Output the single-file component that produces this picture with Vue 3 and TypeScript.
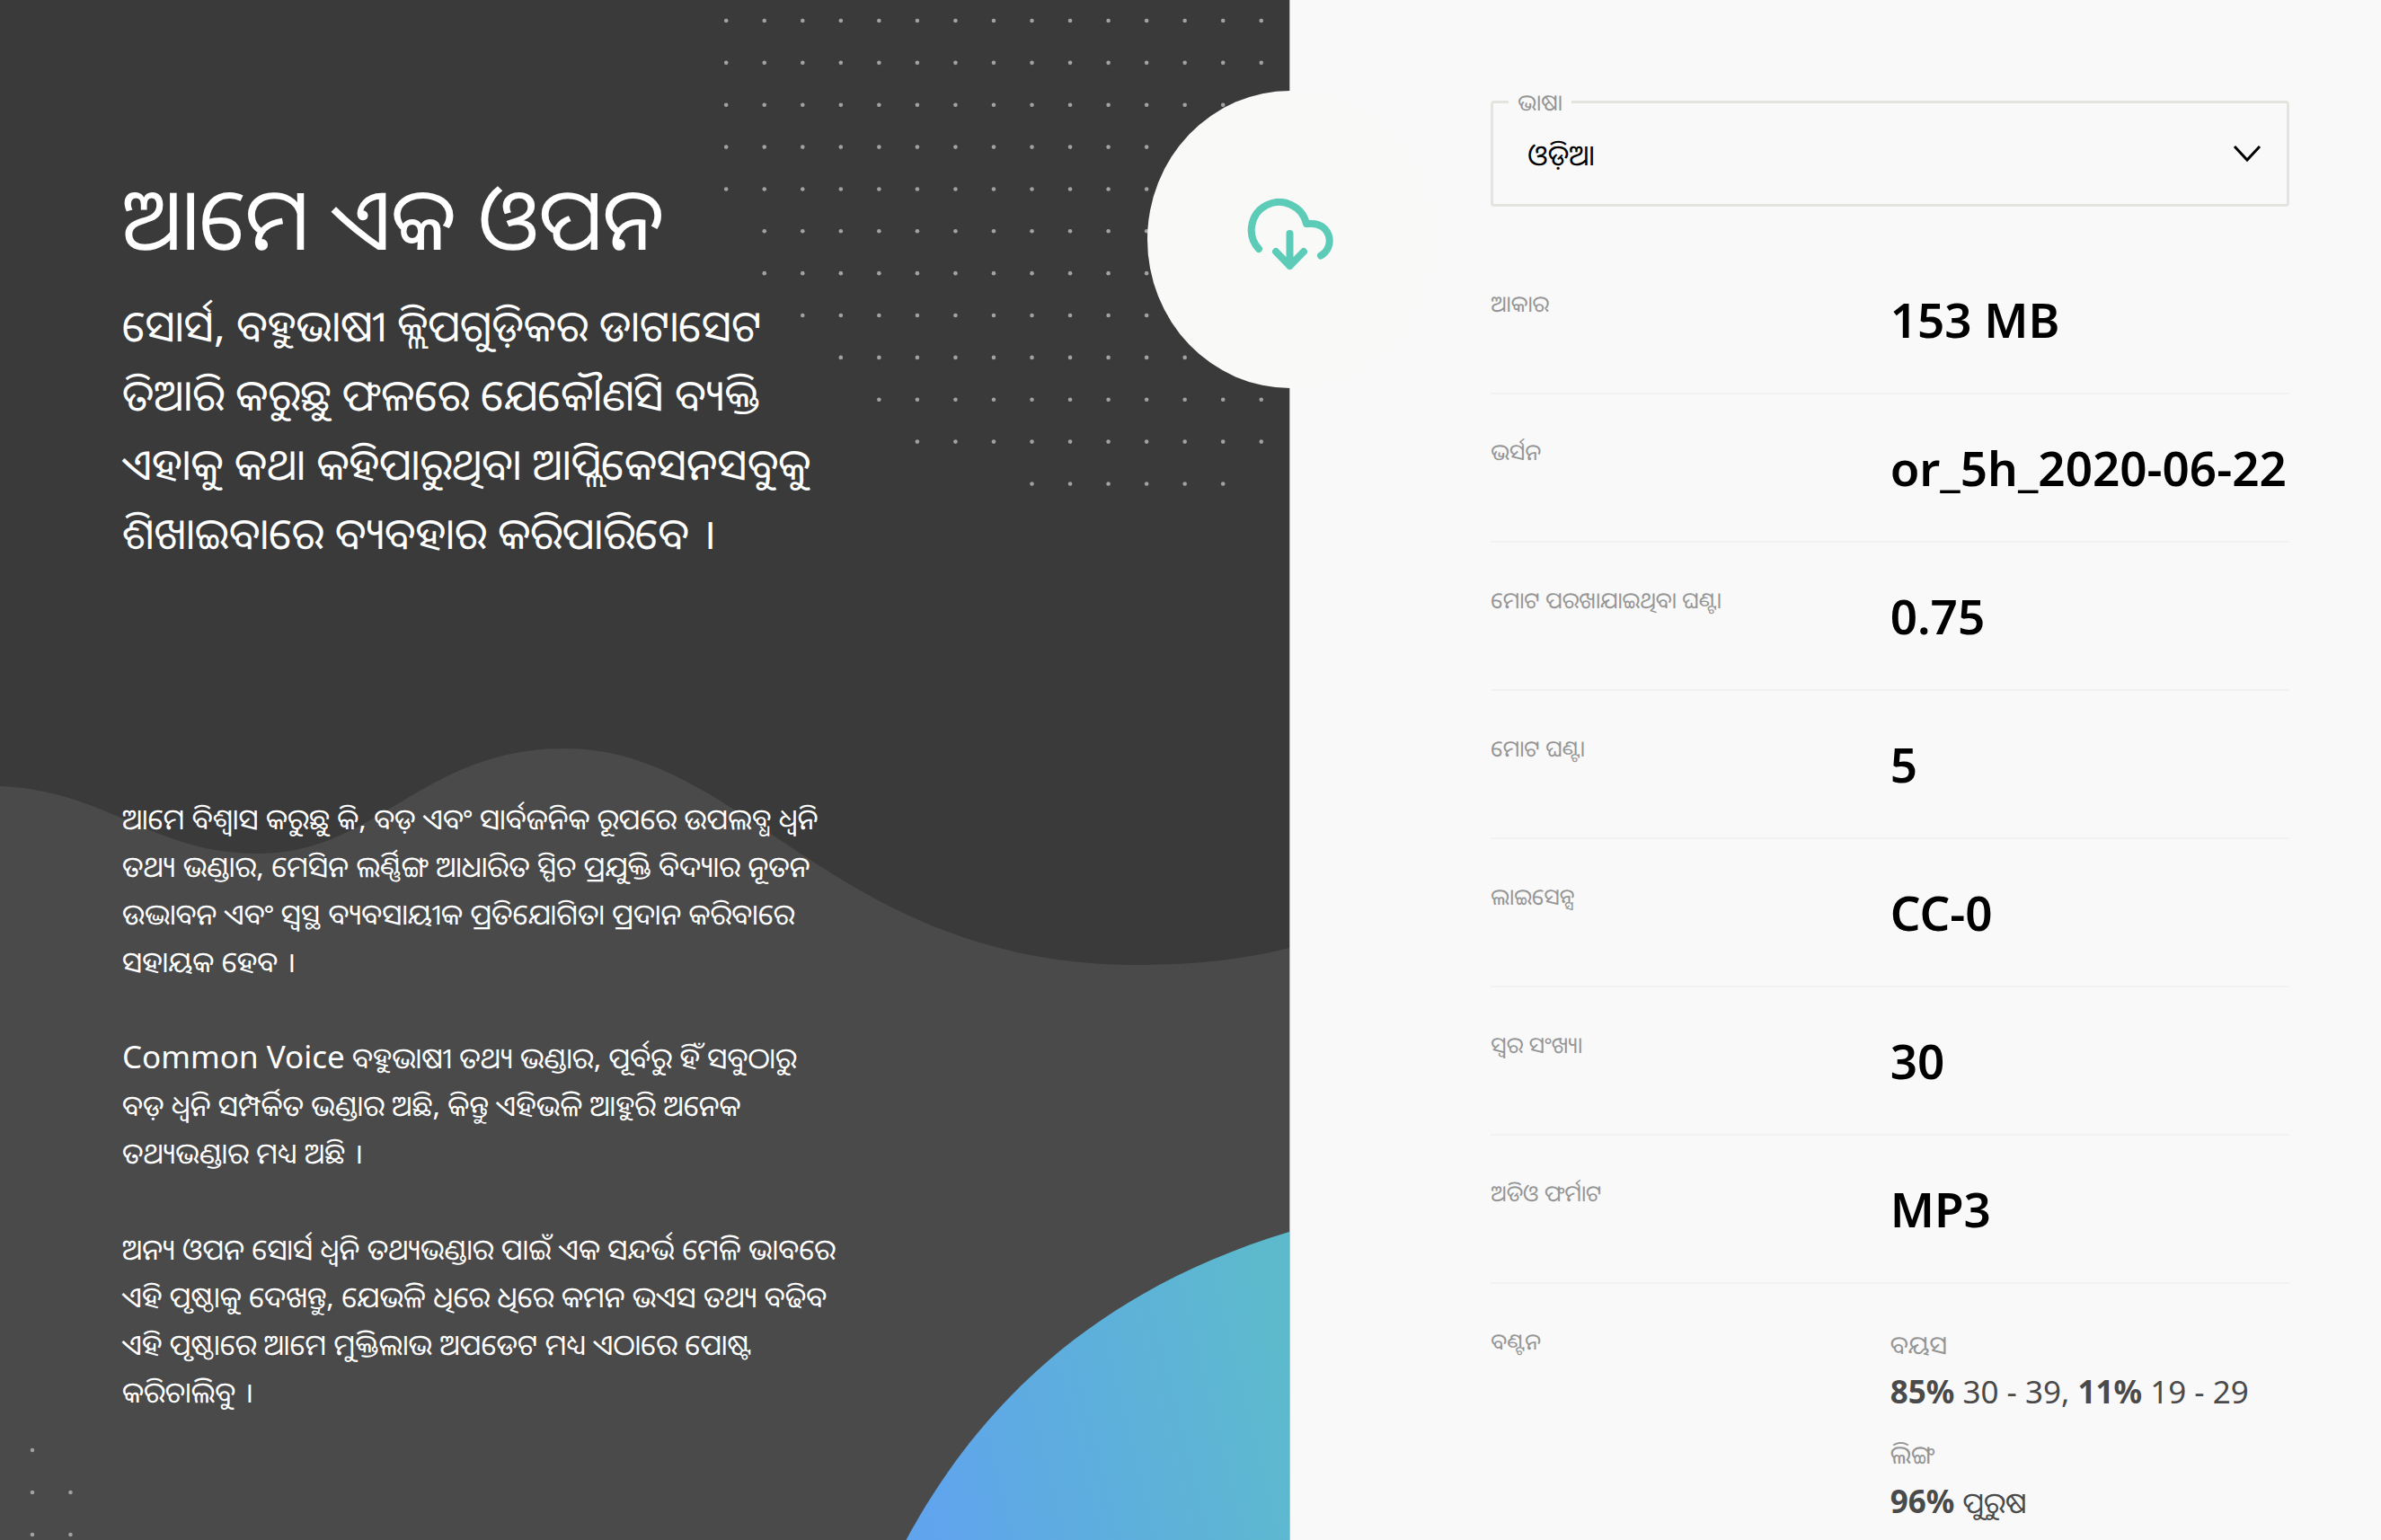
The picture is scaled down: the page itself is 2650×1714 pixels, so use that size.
<script setup lang="ts">
import { computed, ref } from 'vue'

interface Dot {
  x: number
  y: number
}

interface Share {
  percent: string
  name: string
}

// First and last filled column for each row of the dotted pattern
const dotRows: [number, number][] = [
  [0, 14], [0, 14], [0, 14], [0, 14], [0, 14], [1, 14],
  [1, 14], [2, 14], [3, 14], [4, 14], [5, 14], [8, 13],
]

const topDots = computed<Dot[]>(() =>
  dotRows.flatMap(([from, to], row) =>
    Array.from({ length: to - from + 1 }, (_, i) => ({
      x: 808.6 + (from + i) * 42.56,
      y: 23 + row * 46.86,
    })),
  ),
)

const bottomDots: Dot[] = [
  { x: 36, y: 1614 },
  { x: 36, y: 1661 },
  { x: 78.5, y: 1661 },
  { x: 36, y: 1708 },
  { x: 78.5, y: 1708 },
]

const language = ref('or')

const facts = [
  { label: 'ଆକାର', value: '153 MB' },
  { label: 'ଭର୍ସନ', value: 'or_5h_2020-06-22' },
  { label: 'ମୋଟ ପରଖାଯାଇଥିବା ଘଣ୍ଟା', value: '0.75' },
  { label: 'ମୋଟ ଘଣ୍ଟା', value: '5' },
  { label: 'ଲାଇସେନ୍ସ', value: 'CC-0' },
  { label: 'ସ୍ୱର ସଂଖ୍ୟା', value: '30' },
  { label: 'ଅଡିଓ ଫର୍ମାଟ', value: 'MP3' },
]

const splits: { title: string; odia?: boolean; shares: Share[] }[] = [
  {
    title: 'ବୟସ',
    shares: [
      { percent: '85%', name: '30 - 39' },
      { percent: '11%', name: '19 - 29' },
    ],
  },
  { title: 'ଲିଙ୍ଗ', odia: true, shares: [{ percent: '96%', name: 'ପୁରୁଷ' }] },
]
</script>

<template>
  <main class="page">
    <section class="intro">
      <svg class="backdrop" viewBox="0 0 1436 1714" preserveAspectRatio="none" aria-hidden="true">
        <defs>
          <linearGradient id="hill" x1="0" y1="0.6" x2="1" y2="0.4">
            <stop offset="0" stop-color="#60a4ee" />
            <stop offset="0.2" stop-color="#5fa9e5" />
            <stop offset="1" stop-color="#5cbacc" />
          </linearGradient>
        </defs>
        <path
          d="M0 875C120 880 170 950 287 950C420 950 470 833 629 833C830 833 930 1074 1267 1074C1330 1074 1385 1068 1436 1055V1714H0Z"
          fill="#4a4a4a"
        />
        <path d="M1009 1714C1100 1545 1240 1430 1436 1371V1714Z" fill="url(#hill)" />
        <g fill="#a2a2a2">
          <circle v-for="(dot, i) in topDots" :key="`t${i}`" :cx="dot.x" :cy="dot.y" r="2.3" />
          <circle v-for="(dot, i) in bottomDots" :key="`b${i}`" :cx="dot.x" :cy="dot.y" r="2.3" />
        </g>
      </svg>

      <div class="copy">
        <h1>ଆମେ ଏକ ଓପନ</h1>
        <p class="lead">ସୋର୍ସ, ବହୁଭାଷୀ କ୍ଲିପଗୁଡ଼ିକର ଡାଟାସେଟ ତିଆରି କରୁଛୁ ଫଳରେ ଯେକୌଣସି ବ୍ୟକ୍ତି ଏହାକୁ କଥା କହିପାରୁଥିବା ଆପ୍ଲିକେସନସବୁକୁ ଶିଖାଇବାରେ ବ୍ୟବହାର କରିପାରିବେ ।</p>
        <div class="body">
          <p>ଆମେ ବିଶ୍ୱାସ କରୁଛୁ କି, ବଡ଼ ଏବଂ ସାର୍ବଜନିକ ରୂପରେ ଉପଲବ୍ଧ ଧ୍ୱନି ତଥ୍ୟ ଭଣ୍ଡାର, ମେସିନ ଲର୍ଣ୍ଣିଙ୍ଗ ଆଧାରିତ ସ୍ପିଚ ପ୍ରଯୁକ୍ତି ବିଦ୍ୟାର ନୂତନ ଉଦ୍ଭାବନ ଏବଂ ସ୍ୱସ୍ଥ ବ୍ୟବସାୟୀକ ପ୍ରତିଯୋଗିତା ପ୍ରଦାନ କରିବାରେ ସହାୟକ ହେବ ।</p>
          <p><span class="latin" lang="en">Common Voice</span> ବହୁଭାଷୀ ତଥ୍ୟ ଭଣ୍ଡାର, ପୂର୍ବରୁ ହିଁ ସବୁଠାରୁ<br>ବଡ଼ ଧ୍ୱନି ସମ୍ପର୍କିତ ଭଣ୍ଡାର ଅଛି, କିନ୍ତୁ ଏହିଭଳି ଆହୁରି ଅନେକ ତଥ୍ୟଭଣ୍ଡାର ମଧ୍ୟ ଅଛି ।</p>
          <p>ଅନ୍ୟ ଓପନ ସୋର୍ସ ଧ୍ୱନି ତଥ୍ୟଭଣ୍ଡାର ପାଇଁ ଏକ ସନ୍ଦର୍ଭ ମେଳି ଭାବରେ ଏହି ପୃଷ୍ଠାକୁ ଦେଖନ୍ତୁ, ଯେଭଳି ଧିରେ ଧିରେ କମନ ଭଏସ ତଥ୍ୟ ବଢିବ ଏହି ପୃଷ୍ଠାରେ ଆମେ ମୁକ୍ତିଲାଭ ଅପଡେଟ ମଧ୍ୟ ଏଠାରେ ପୋଷ୍ଟ କରିଚାଲିବୁ ।</p>
        </div>
      </div>

      <div class="badge">
        <svg viewBox="0 0 96 80" width="96" height="80" fill="none" stroke="#5cccb8" stroke-width="8" stroke-linecap="round" stroke-linejoin="round" aria-hidden="true">
          <path d="M13 56A31 31 0 1 1 66 28H71A19 19 0 0 1 82 63.5" />
          <path d="M47.5 39V75M32 59L47.5 75L63 59" />
        </svg>
      </div>
    </section>

    <section class="details">
      <div class="field">
        <label for="language">ଭାଷା</label>
        <select id="language" v-model="language">
          <option value="or">ଓଡ଼ିଆ</option>
        </select>
        <svg class="chevron" viewBox="0 0 32 20" width="32" height="20" fill="none" stroke="#000" stroke-width="3" aria-hidden="true">
          <path d="M2 2L16 17L30 2" />
        </svg>
      </div>

      <dl class="facts">
        <div v-for="fact in facts" :key="fact.label" class="row">
          <dt>{{ fact.label }}</dt>
          <dd class="value">{{ fact.value }}</dd>
        </div>
        <div class="row">
          <dt>ବଣ୍ଟନ</dt>
          <dd class="splits">
            <div v-for="split in splits" :key="split.title" class="split">
              <h2>{{ split.title }}</h2>
              <p>
                <template v-for="(share, i) in split.shares" :key="share.name"><template v-if="i > 0">, </template><b>{{ share.percent }}</b> <span :class="{ odia: split.odia }">{{ share.name }}</span></template>
              </p>
            </div>
          </dd>
        </div>
      </dl>
    </section>
  </main>
</template>

<style>
body {
  background: #f9f9f9;
}
</style>

<style scoped>
.page {
  display: flex;
  height: 100vh;
  overflow: hidden;
  font-family: "Noto Sans", "Noto Sans Oriya", sans-serif;
  color: #000;
}

h1,
h2,
p,
dl,
dd {
  margin: 0;
}

.intro {
  position: relative;
  flex: 0 0 54.2%;
  box-sizing: border-box;
  background: #3a3a3a;
  border-right: 1px solid #bbb;
  color: #fff;
}

.backdrop {
  position: absolute;
  inset: 0;
  width: 100%;
  height: 100%;
}

.copy {
  position: relative;
  padding: 181px 0 0 136px;
}

h1 {
  font-size: 96px;
  line-height: 120px;
  font-weight: 400;
}

.lead {
  max-width: 790px;
  margin-top: 22px;
  font-size: 48px;
  line-height: 77px;
}

.body {
  max-width: 800px;
  margin-top: 253px;
  font-size: 32px;
  line-height: 53px;
}

.body p + p {
  margin-top: 54px;
}

.latin {
  font-size: 35px;
  line-height: 1;
}

.badge {
  position: absolute;
  z-index: 1;
  top: 101px;
  right: -160px;
  box-sizing: border-box;
  width: 318px;
  height: 331px;
  padding-bottom: 11px;
  border-radius: 50%;
  background: #f9f9f7;
  display: grid;
  place-items: center;
}

.details {
  flex: 1;
  min-width: 0;
  padding: 112px 102px 0 223px;
  background: #f9f9f9;
}

.field {
  position: relative;
}

.field label {
  position: absolute;
  top: -18px;
  left: 20px;
  padding: 0 10px;
  background: #f9f9f9;
  color: #959595;
  font-size: 25px;
  line-height: 38px;
}

.field select {
  display: block;
  width: 100%;
  height: 118px;
  padding: 0 96px 0 38px;
  border: 3px solid #e4e4df;
  border-radius: 4px;
  background: transparent;
  appearance: none;
  font-family: inherit;
  font-size: 32px;
  color: #000;
}

.chevron {
  position: absolute;
  top: 49px;
  right: 31px;
  pointer-events: none;
}

.facts {
  margin-top: 44px;
}

.row {
  display: grid;
  grid-template-columns: minmax(0, 1fr) minmax(0, 1fr);
  min-height: 163px;
  border-bottom: 2px solid #f2f2f2;
}

.row:last-child {
  border-bottom: 0;
}

dt {
  padding-top: 44px;
  color: #959595;
  font-size: 25px;
  line-height: 38px;
}

.value {
  padding-top: 45px;
  font-size: 53px;
  line-height: 74px;
  font-weight: 600;
  white-space: nowrap;
}

.splits {
  padding-top: 45px;
}

.split h2 {
  color: #959595;
  font-size: 28px;
  line-height: 44px;
  font-weight: 400;
}

.split p {
  margin: 4px 0 20px;
  color: #4a4a4a;
  font-size: 35px;
  line-height: 54px;
}

.split .odia {
  font-size: 32px;
  line-height: 1;
}
</style>
